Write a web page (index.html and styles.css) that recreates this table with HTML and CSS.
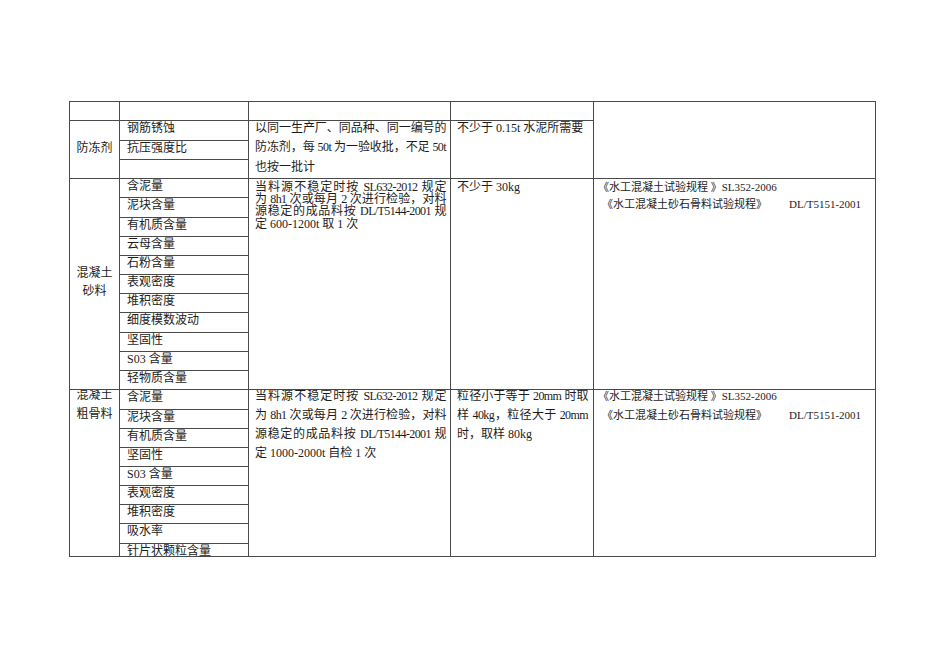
FILE: index.html
```html
<!DOCTYPE html>
<html lang="zh-CN">
<head>
<meta charset="utf-8">
<title>检验批次表</title>
<link rel="stylesheet" href="styles.css">
</head>
<body>
<div class="page">
<table class="spec">
<colgroup><col class="w1"><col class="w2"><col class="w3"><col class="w4"><col class="w5"></colgroup>
<tbody>
<tr class="r19"><td></td><td></td><td></td><td></td><td rowspan="4"></td></tr>

<tr class="r20">
  <td class="name mid" rowspan="3"><div class="nm">防冻剂</div></td>
  <td class="sub"><div class="s">钢筋锈蚀</div></td>
  <td class="txt" rowspan="3"><div class="blk loose"><span class="jl">以同一生产厂、同品种、同一编号的</span><span class="jl">防冻剂，每 50t 为一验收批，不足 50t</span><span class="ll">也按一批计</span></div></td>
  <td class="txt t4" rowspan="3"><div class="blk loose"><span class="ll">不少于 0.15t 水泥所需要</span></div></td>
</tr>
<tr class="r19"><td class="sub"><div class="s">抗压强度比</div></td></tr>
<tr class="r19"><td class="sub"><div class="s"></div></td></tr>

<tr class="r19">
  <td class="name mid" rowspan="11"><div class="nm2">混凝土<br>砂料</div></td>
  <td class="sub"><div class="s">含泥量</div></td>
  <td class="txt" rowspan="11"><div class="blk tight"><span class="jl">当料源不稳定时按 SL632-2012 规定</span><span class="jl">为 8h1 次或每月 2 次进行检验，对料</span><span class="jl">源稳定的成品料按 DL/T5144-2001 规</span><span class="ll">定 600-1200t 取 1 次</span></div></td>
  <td class="txt t4" rowspan="11"><div class="blk mid17"><span class="ll">不少于 30kg</span></div></td>
  <td class="txt t5" rowspan="11"><div class="blk ref17"><span class="ll">《水工混凝土试验规程 》SL352-2006</span><span class="ll ind">《水工混凝土砂石骨料试验规程》<span class="gap"></span>DL/T5151-2001</span></div></td>
</tr>
<tr class="r20"><td class="sub"><div class="s">泥块含量</div></td></tr>
<tr class="r19"><td class="sub"><div class="s">有机质含量</div></td></tr>
<tr class="r19"><td class="sub"><div class="s">云母含量</div></td></tr>
<tr class="r19"><td class="sub"><div class="s">石粉含量</div></td></tr>
<tr class="r19"><td class="sub"><div class="s">表观密度</div></td></tr>
<tr class="r19"><td class="sub"><div class="s">堆积密度</div></td></tr>
<tr class="r20"><td class="sub"><div class="s">细度模数波动</div></td></tr>
<tr class="r19"><td class="sub"><div class="s">坚固性</div></td></tr>
<tr class="r19"><td class="sub"><div class="s">S03 含量</div></td></tr>
<tr class="r19"><td class="sub"><div class="s">轻物质含量</div></td></tr>

<tr class="r20">
  <td class="name" rowspan="9"><div class="nm3">混凝土<br>粗骨料</div></td>
  <td class="sub"><div class="s">含泥量</div></td>
  <td class="txt" rowspan="9"><div class="blk loose3"><span class="jl">当料源不稳定时按 SL632-2012 规定</span><span class="jl">为 8h1 次或每月 2 次进行检验，对料</span><span class="jl">源稳定的成品料按 DL/T5144-2001 规</span><span class="ll">定 1000-2000t 自检 1 次</span></div></td>
  <td class="txt t4" rowspan="9"><div class="blk loose3"><span class="jl">粒径小于等于 20mm 时取</span><span class="jl">样 40kg，粒径大于 20mm</span><span class="ll">时，取样 80kg</span></div></td>
  <td class="txt t5" rowspan="9"><div class="blk ref19"><span class="ll">《水工混凝土试验规程 》SL352-2006</span><span class="ll ind">《水工混凝土砂石骨料试验规程》<span class="gap"></span>DL/T5151-2001</span></div></td>
</tr>
<tr class="r19"><td class="sub"><div class="s">泥块含量</div></td></tr>
<tr class="r19"><td class="sub"><div class="s">有机质含量</div></td></tr>
<tr class="r19"><td class="sub"><div class="s">坚固性</div></td></tr>
<tr class="r19"><td class="sub"><div class="s">S03 含量</div></td></tr>
<tr class="r19"><td class="sub"><div class="s">表观密度</div></td></tr>
<tr class="r19"><td class="sub"><div class="s">堆积密度</div></td></tr>
<tr class="r20"><td class="sub"><div class="s">吸水率</div></td></tr>
<tr class="r12"><td class="sub"><div class="s clip">针片状颗粒含量</div></td></tr>
</tbody>
</table>
</div>
</body>
</html>
```

FILE: styles.css
```css
html, body {
  margin: 0;
  padding: 0;
  background: #ffffff;
}

body {
  color: #1c1c1c;
  font-family: "Liberation Serif", "Noto Sans CJK SC", serif;
  font-size: 12px;
}

.page {
  padding: 101px 0 0 69px;
}

.spec {
  border-collapse: collapse;
  table-layout: fixed;
  width: 806px;
}

.w1 { width: 50px; }
.w2 { width: 129px; }
.w3 { width: 202px; }
.w4 { width: 143px; }
.w5 { width: 282px; }

.spec td {
  border: 1px solid #4a4a4a;
  padding: 0;
  vertical-align: top;
  overflow: hidden;
}

.r12 { height: 12px; }
.r19 { height: 19px; }
.r20 { height: 20px; }

/* first column: material name */
.spec td.name {
  text-align: center;
}
.spec td.name.mid {
  vertical-align: middle;
}
.nm {
  line-height: 17px;
  margin-top: -3px;
}
.nm2 {
  line-height: 17.5px;
  margin-top: -3px;
}
.nm3 {
  line-height: 19px;
  margin-top: -4px;
}

/* second column: test items */
.spec td.sub {
  padding-left: 7px;
}
.s {
  line-height: 15px;
  white-space: nowrap;
}
.s.clip {
  height: 12px;
  overflow: hidden;
}

/* text columns */
.spec td.txt {
  padding: 0 4px 0 6px;
}
.blk {
  display: flex;
  flex-direction: column;
}
.jl {
  display: block;
  text-align: justify;
  text-align-last: justify;
  letter-spacing: -0.6px;
  white-space: normal;
}
.ll {
  display: block;
  white-space: nowrap;
}
.loose {
  line-height: 19.3px;
  margin-top: -2px;
}
.loose3 {
  line-height: 19px;
  margin-top: -3px;
}
.tight {
  line-height: 12.2px;
  margin-top: 2px;
}
.mid17 {
  line-height: 17px;
}

.spec td.t4 {
  padding: 0 5px 0 6px;
}

.spec td.t5 {
  padding: 0 4px 0 4px;
  font-size: 11px;
}
.ref17 {
  line-height: 17px;
}
.ref19 {
  line-height: 19px;
  margin-top: -3px;
}
.ind {
  padding-left: 4px;
}
.gap {
  display: inline-block;
  width: 22px;
}
```
